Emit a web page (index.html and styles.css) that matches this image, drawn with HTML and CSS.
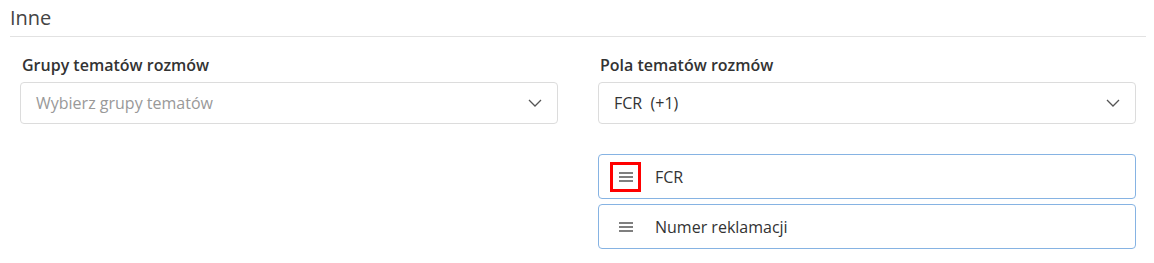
FILE: index.html
```html
<!DOCTYPE html>
<html lang="pl">
<head>
    <meta charset="UTF-8">
    <meta name="viewport" content="width=device-width, initial-scale=1.0">
    <title>Inne</title>
    <link rel="stylesheet" href="styles.css">
</head>
<body>
    <div class="section">
        <h3 class="section-title">Inne</h3>
        <div class="fields">
            <div class="field">
                <label class="field-label">Grupy tematów rozmów</label>
                <div class="select">
                    <span class="placeholder">Wybierz grupy tematów</span>
                    <svg class="chevron" width="14" height="8" viewBox="0 0 14 8"><path d="M1 1l6 6 6-6" fill="none" stroke="#555" stroke-width="1.3"/></svg>
                </div>
            </div>
            <div class="field">
                <label class="field-label">Pola tematów rozmów</label>
                <div class="select">
                    <span class="value">FCR&nbsp; (+1)</span>
                    <svg class="chevron" width="14" height="8" viewBox="0 0 14 8"><path d="M1 1l6 6 6-6" fill="none" stroke="#555" stroke-width="1.3"/></svg>
                </div>
                <div class="sort-list">
                    <div class="sort-item">
                        <span class="handle active">
                            <svg width="14" height="10" viewBox="0 0 14 10"><path d="M0 1h14M0 5h14M0 9h14" stroke="#555" stroke-width="1.4"/></svg>
                        </span>
                        <span class="item-text">FCR</span>
                    </div>
                    <div class="sort-item">
                        <span class="handle">
                            <svg width="14" height="10" viewBox="0 0 14 10"><path d="M0 1h14M0 5h14M0 9h14" stroke="#555" stroke-width="1.4"/></svg>
                        </span>
                        <span class="item-text">Numer reklamacji</span>
                    </div>
                </div>
            </div>
        </div>
    </div>
</body>
</html>
```

FILE: styles.css
```css
body {
    margin: 0;
    font-family: "Open Sans", sans-serif;
    color: #333;
    background-color: #fff;
}
.section {
    padding: 6px 8px 0 10px;
}
.section-title {
    margin: 0;
    padding-bottom: 6px;
    font-size: 20px;
    line-height: 24px;
    font-weight: 400;
    color: #444;
    border-bottom: 1px solid #e2e2e2;
}
.fields {
    display: grid;
    grid-template-columns: 538px 538px;
    column-gap: 40px;
    padding: 17px 0 0 10px;
}
.field-label {
    display: block;
    font-size: 16px;
    line-height: 22px;
    font-weight: 600;
    color: #333;
    padding-left: 2px;
    margin-bottom: 6px;
}
.select {
    display: flex;
    align-items: center;
    justify-content: space-between;
    box-sizing: border-box;
    height: 42px;
    padding: 0 15px 0 15px;
    border: 1px solid #dcdcdc;
    border-radius: 4px;
    font-size: 16px;
}
.placeholder {
    color: #999;
}
.value {
    color: #333;
}
.sort-list {
    margin-top: 30px;
}
.sort-item {
    display: flex;
    align-items: center;
    box-sizing: border-box;
    height: 45px;
    margin-bottom: 5px;
    padding-left: 11px;
    border: 1px solid #86b3e3;
    border-radius: 4px;
    font-size: 16px;
    color: #333;
}
.handle {
    display: flex;
    align-items: center;
    justify-content: center;
    box-sizing: border-box;
    width: 31px;
    height: 30px;
    border: 3px solid transparent;
}
.handle.active {
    border-color: #f00;
}
.item-text {
    margin-left: 14px;
}
```
